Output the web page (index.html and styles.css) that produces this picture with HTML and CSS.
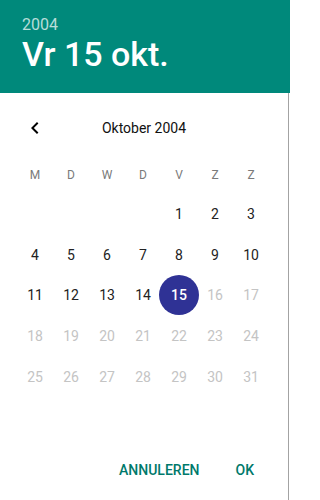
FILE: index.html
```html
<!DOCTYPE html>
<html lang="nl">
<head>
<meta charset="utf-8">
<title>Datum kiezen</title>
<link rel="stylesheet" href="styles.css">
</head>
<body>
<div class="dialog">
  <header class="header">
    <div class="year">2004</div>
    <div class="date">Vr 15 okt.</div>
  </header>
  <main class="content">
    <div class="nav">
      <button class="prev" aria-label="Vorige maand">
        <svg width="24" height="24" viewBox="0 0 24 24"><path d="M15.41 7.41L14 6l-6 6 6 6 1.41-1.41L10.83 12z" fill="#000"/></svg>
      </button>
      <div class="month">Oktober 2004</div>
      <div class="spacer"></div>
    </div>
    <div class="weekdays">
      <span>M</span><span>D</span><span>W</span><span>D</span><span>V</span><span>Z</span><span>Z</span>
    </div>
    <div class="days">
      <span></span><span></span><span></span><span></span>
      <span>1</span><span>2</span><span>3</span>
      <span>4</span><span>5</span><span>6</span><span>7</span><span>8</span><span>9</span><span>10</span>
      <span>11</span><span>12</span><span>13</span><span>14</span><span class="selected"><b>15</b></span><span class="off">16</span><span class="off">17</span>
      <span class="off">18</span><span class="off">19</span><span class="off">20</span><span class="off">21</span><span class="off">22</span><span class="off">23</span><span class="off">24</span>
      <span class="off">25</span><span class="off">26</span><span class="off">27</span><span class="off">28</span><span class="off">29</span><span class="off">30</span><span class="off">31</span>
    </div>
    <div class="actions">
      <button class="btn">ANNULEREN</button>
      <button class="btn">OK</button>
    </div>
  </main>
</div>
</body>
</html>
```
FILE: styles.css
```css
html, body {
  margin: 0;
  padding: 0;
  background: #fff;
}
body {
  width: 290px;
  height: 500px;
  overflow: hidden;
  font-family: Roboto, "Noto Sans", sans-serif;
}
.dialog {
  display: flex;
  flex-direction: column;
  height: 500px;
}
.header {
  box-sizing: border-box;
  height: 93px;
  background: #00897b;
  color: #fff;
  padding: 16px 0 0 22px;
}
.year {
  font-size: 16px;
  line-height: 18px;
  color: rgba(255, 255, 255, 0.72);
}
.date {
  font-size: 34px;
  line-height: 40px;
  font-weight: 500;
}
.content {
  flex: 1;
  box-sizing: border-box;
  width: 289px;
  border-right: 1px solid #a3a3a3;
  display: flex;
  flex-direction: column;
}
.nav {
  margin-top: 11px;
  height: 48px;
  padding: 0 17px;
  display: grid;
  grid-template-columns: 36px 1fr 36px;
  align-items: center;
}
.prev {
  border: 0;
  background: none;
  padding: 0;
  width: 36px;
  height: 36px;
  display: flex;
  align-items: center;
  justify-content: center;
}
.prev svg { display: block; }
.month {
  text-align: center;
  font-size: 14px;
  font-weight: 400;
  color: #111;
}
.weekdays {
  margin-top: 4px;
  height: 37.5px;
  padding: 0 17px;
  display: grid;
  grid-template-columns: repeat(7, 36px);
  align-items: center;
  justify-items: center;
  font-size: 12px;
  color: #7a7a7a;
}
.days {
  padding: 0 17px;
  display: grid;
  grid-template-columns: repeat(7, 36px);
  grid-auto-rows: 40.8px;
  align-items: center;
  justify-items: center;
  font-size: 14px;
  color: #222;
}
.days span {
  display: flex;
  align-items: center;
  justify-content: center;
}
.days .off { color: #c4c4c4; }
.days .selected b {
  width: 40px;
  height: 40px;
  border-radius: 50%;
  background: #2f3295;
  color: #fff;
  font-weight: 500;
  display: flex;
  align-items: center;
  justify-content: center;
}
.actions {
  margin-top: 55px;
  height: 36px;
  display: flex;
  justify-content: flex-end;
  align-items: center;
  gap: 36px;
  padding-right: 34px;
}
.btn {
  border: 0;
  background: none;
  padding: 0;
  font-family: Roboto, "Noto Sans", sans-serif;
  font-size: 14px;
  font-weight: 500;
  color: #00796b;
}
```
